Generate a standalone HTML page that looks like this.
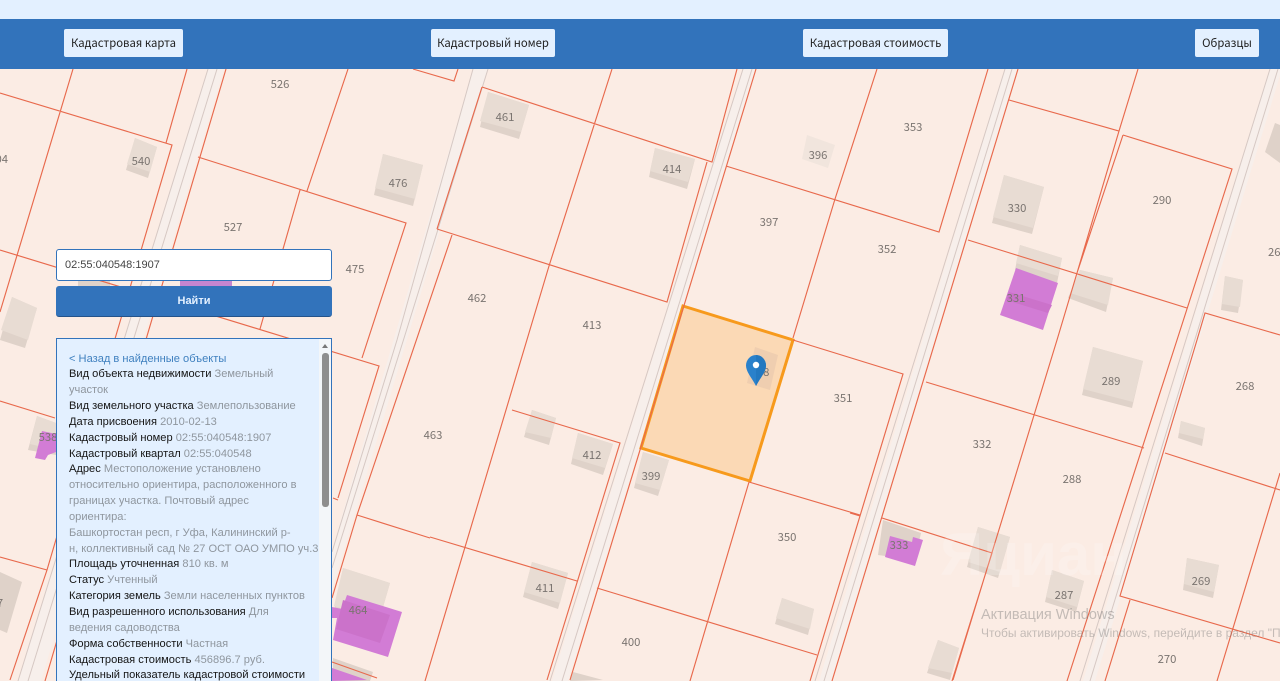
<!DOCTYPE html>
<html lang="ru"><head><meta charset="utf-8"><title>Кадастровая карта</title>
<style>
html,body{margin:0;padding:0;width:1280px;height:681px;overflow:hidden;background:#fbece4}
#wrap{position:relative;width:1280px;height:681px;overflow:hidden}
#top{position:absolute;left:0;top:0;width:1280px;height:19px;background:#e3f0ff}
#nav{position:absolute;left:0;top:19px;width:1280px;height:50px;background:#3273bb}
.nb{position:absolute;top:29px;height:28px;background:#e3f0ff;border-radius:2px;text-align:center;color:#222;font:11.3px/28px "Noto Sans CJK JP","Liberation Sans",sans-serif;white-space:nowrap}
svg{position:absolute;left:0;top:0;filter:blur(.35px)}
svg text{font-family:"Noto Sans CJK JP","DejaVu Sans",sans-serif;font-size:11.3px;fill:#7a7470;text-anchor:middle}
#inp{position:absolute;left:56px;top:249px;width:276px;height:32px;box-sizing:border-box;padding-left:8px;background:#fff;border:1.5px solid #3273bb;border-radius:3px;font:11px/30px "Liberation Sans",sans-serif;color:#444}
#btn{position:absolute;left:56px;top:286px;width:276px;height:31px;background:#3273bb;border-bottom:1px solid #24538a;box-sizing:border-box;border-radius:3px;color:#e3f0ff;text-align:center;font:bold 11px/30px "Liberation Sans",sans-serif}
#panel{position:absolute;left:56px;top:338px;width:276px;height:360px;box-sizing:border-box;background:#e3f0ff;border:1.5px solid #3273bb;overflow:hidden}
#txt{position:absolute;left:12px;top:12.500px;width:250px;height:345px;overflow:hidden;font:11.1px/15.85px "Liberation Sans",sans-serif;color:#8f969e}
#txt b{font-weight:normal;color:#151515}
#txt a{color:#3f80bf}
#sb{position:absolute;right:0;top:0;width:12px;height:360px;background:#f3f6f9}
#th{position:absolute;left:3px;top:14px;width:7px;height:154px;background:#8e8e8e;border-radius:3px}
#ar{position:absolute;left:3px;top:5px;width:0;height:0;border-left:3.5px solid transparent;border-right:3.5px solid transparent;border-bottom:4px solid #777}
.wm{position:absolute;white-space:nowrap;font-family:"Liberation Sans",sans-serif;color:rgba(120,120,120,.42)}
.u{white-space:nowrap}
</style></head><body><div id="wrap">
<svg width="1280" height="681" viewBox="0 0 1280 681">
<g fill="#f7efeb">
<polygon points="208,69 224,69 41,681 18,681"/>
<polygon points="473,69 488,69 332,590 332,550"/>
<polygon points="743,69 755,69 568,681 552,681"/>
<polygon points="1005,69 1017,69 831,681 819,681"/>
<polygon points="1270,69 1282,69 1095,681 1083,681"/>
</g>
<g fill="none" stroke="#d6c8c3" stroke-width="1">
<path d="M208 69L18 681M217 69L28 681M473 69L397 340L332 552M488 69L405 335L332 568M743 69L550 681M752 69L562 681M1005 69L815 681M1012 69L824 681M1270 69L1080 681M1278 69L1090 681"/>
</g>
<g>
<g fill="#dfd2c9">
<polygon points="135,138 157,147 148,178 126,170"/><polygon points="383,154 423,165 413,206 374,195"/><polygon points="12,297 37,308 25,348 0,340"/><polygon points="78,280 110,280 110,290 78,290"/><polygon points="37,416 56,423 56,455 28,450"/><polygon points="0,572 22,582 7,633 0,630"/><polygon points="343,568 390,583 377,628 333,615"/><polygon points="333,658 373,672 370,681 333,681"/><polygon points="488,92 529,105 519,139 480,127"/><polygon points="655,148 695,159 687,189 649,177"/><polygon points="532,410 556,418 549,445 524,437"/><polygon points="578,433 613,444 603,475 571,464"/><polygon points="643,452 669,460 658,496 634,488"/><polygon points="532,562 568,573 558,609 523,597"/><polygon points="782,598 814,609 808,635 775,624"/><polygon points="573,672 603,680 570,681"/><polygon points="1004,175 1044,187 1032,234 992,223"/><polygon points="1020,245 1062,258 1057,283 1015,270"/><polygon points="1080,270 1113,278 1106,312 1068,298"/><polygon points="1225,276 1243,280 1238,313 1221,310"/><polygon points="1275,123 1280,125 1280,163 1265,152"/><polygon points="1093,347 1143,361 1132,408 1082,395"/><polygon points="1181,421 1205,428 1202,446 1178,438"/><polygon points="883,520 921,533 915,560 878,555"/><polygon points="978,527 1010,537 998,578 967,567"/><polygon points="1052,570 1084,581 1076,612 1045,602"/><polygon points="1187,558 1219,565 1213,598 1183,590"/><polygon points="938,640 959,648 950,680 927,673"/>
</g>
<g fill="#e8dcd3">
<polygon points="135,138 157,147 150,172 127,164"/><polygon points="383,154 423,165 415,199 375,188"/><polygon points="12,297 37,308 28,340 1,330"/><polygon points="37,416 56,423 56,450 30,444"/><polygon points="343,568 390,583 379,620 334,606"/><polygon points="488,92 529,105 521,132 480,121"/><polygon points="655,148 695,159 688,182 650,171"/><polygon points="532,410 556,418 551,438 525,432"/><polygon points="578,433 613,444 605,468 572,458"/><polygon points="643,452 669,460 660,490 635,483"/><polygon points="532,562 568,573 560,603 524,592"/><polygon points="782,598 814,609 810,629 776,618"/><polygon points="1004,175 1044,187 1033,228 993,217"/><polygon points="1020,245 1062,258 1058,276 1016,263"/><polygon points="1080,270 1113,278 1108,305 1070,293"/><polygon points="1225,276 1243,280 1240,307 1222,304"/><polygon points="1093,347 1143,361 1133,402 1083,389"/><polygon points="1181,421 1205,428 1203,439 1179,433"/><polygon points="978,527 1010,537 1000,572 968,562"/><polygon points="1052,570 1084,581 1077,607 1046,597"/><polygon points="1187,558 1219,565 1214,592 1184,584"/><polygon points="938,640 959,648 952,673 928,668"/>
</g>
<polygon points="807,135 835,145 828,168 802,159" fill="#f1e5dd"/>
</g>
<polygon points="683,306 793,340 750,481 641,448" fill="#fbd9b5"/>
<polygon points="755,347 778,355 770,390 747,383" fill="#efceb0"/>
<polygon points="683,306 793,340 750,481 641,448" fill="none" stroke="#f79a1c" stroke-width="3"/>
<g fill="#d27cd5">
<polygon points="180,279 232,279 232,286 180,286" fill="#c585d0"/>
<polygon points="42,431 56,434 56,452 48,455 45,460 35,458"/>
<polygon points="347,595 402,612 388,657 333,640 337,618 332,618 332,607 342,609"/>
<polygon points="332,668 367,680 332,681"/>
<polygon points="1016,268 1058,283 1043,330 1000,315"/>
<polygon points="890,536 912,542 913,537 923,540 915,566 885,557"/>
</g>
<polygon points="1009,292 1052,305 1048,313 1006,300" fill="#cb72ca"/>
<polygon points="343,600 390,615 380,643 336,629" fill="#cb72ca"/>
<path fill="none" stroke="#e8694c" stroke-width="1.15" d="M73 69L0 312M0 93L172 145L47 570L10 680M187 69L166 143M226 69L45 681M0 250L379 366L338 498M0 401L55 418M0 557L47 570M198 157L406 223L362 358M348 69L307 191M300 190L260 329M413 69L454 81L458 69M482 87L437 229M452 235L357 515L332 598M437 229L667 302L707 162M482 87L712 162L737 69M612 69L549 266L425 681M512 410L620 443L547 680M430 537L577 581M357 515L430 538M756 69L570 680M726 166L939 232L988 69M877 69L835 199L793 338M793 340L903 374L810 681M749 482L860 515M749 482L690 681M597 588L817 655M1018 69L832 681M1009 100L1119 131L1138 69M1119 131L1077 273L1057 340L953 680M1123 135L1232 169L1177 340L1067 681M1123 135L1077 273M968 240L1187 308M926 382L1144 448M1197 340L1205 313L1280 335M1197 340L1120 596L1280 643M1165 453L1280 490M1280 473L1217 681M1130 600L1105 681M882 518L992 553L952 681M850 513L860 516M332 662L377 678M333 498L338 500"/>
<text x="8" y="163" style="text-anchor:end">504</text>
<text x="280" y="88">526</text><text x="141" y="165">540</text><text x="398" y="187">476</text><text x="233" y="231">527</text><text x="355" y="273">475</text><text x="505" y="121">461</text><text x="672" y="173">414</text><text x="818" y="159">396</text><text x="769" y="226">397</text><text x="477" y="302">462</text><text x="592" y="329">413</text><text x="913" y="131">353</text><text x="887" y="253">352</text><text x="1017" y="212">330</text><text x="1162" y="204">290</text><text x="1268" y="256" style="text-anchor:start">268</text><text x="1016" y="302">331</text><text x="1111" y="385">289</text><text x="1245" y="390">268</text><text x="843" y="402">351</text><text x="760" y="376">348</text><text x="433" y="439">463</text><text x="592" y="459">412</text><text x="651" y="480">399</text><text x="982" y="448">332</text><text x="1072" y="483">288</text><text x="787" y="541">350</text><text x="899" y="549">333</text><text x="545" y="592">411</text><text x="1064" y="599">287</text><text x="1201" y="585">269</text><text x="1167" y="663">270</text><text x="631" y="646">400</text><text x="358" y="614">464</text><text x="48" y="441">538</text><text x="0" y="607">7</text>
<path d="M756 386C752 378 746 372 746 365.500A10 10.500 0 0 1 766 365.500C766 372 760 378 756 386Z" fill="#2a81cb"/>
<path d="M756 386C760 378 766 372 766 365.500A10 10.500 0 0 0 756 355Z" fill="#2378c0"/>
<circle cx="756" cy="365" r="3.2" fill="#fff"/>
</svg>
<div id="top"></div><div id="nav"></div>
<div class="nb" style="left:64px;width:119px">Кадастровая карта</div>
<div class="nb" style="left:431px;width:124px">Кадастровый номер</div>
<div class="nb" style="left:803px;width:145px">Кадастровая стоимость</div>
<div class="nb" style="left:1195px;width:64px">Образцы</div>
<div id="inp">02:55:040548:1907</div>
<div id="btn">Найти</div>
<div id="panel">
<div id="txt"><a>&lt; Назад в найденные объекты</a><br>
<b>Вид объекта недвижимости</b> Земельный<br>участок<br>
<b>Вид земельного участка</b> Землепользование<br>
<b>Дата присвоения</b> 2010-02-13<br>
<b>Кадастровый номер</b> 02:55:040548:1907<br>
<b>Кадастровый квартал</b> 02:55:040548<br>
<b>Адрес</b> Местоположение установлено<br>относительно ориентира, расположенного в<br>границах участка. Почтовый адрес<br>ориентира:<br>Башкортостан респ, г Уфа, Калининский р-<br><span class="u">н, коллективный сад № 27 ОСТ ОАО УМПО уч.39</span><br>
<b>Площадь уточненная</b> 810 кв. м<br>
<b>Статус</b> Учтенный<br>
<b>Категория земель</b> Земли населенных пунктов<br>
<b>Вид разрешенного использования</b> Для<br>ведения садоводства<br>
<b>Форма собственности</b> Частная<br>
<b>Кадастровая стоимость</b> 456896.7 руб.<br>
<b>Удельный показатель кадастровой стоимости</b>
</div>
<div id="sb"><div id="ar"></div><div id="th"></div></div>
</div>
<div class="wm" style="left:940px;top:520px;font-size:60px;font-weight:bold;color:rgba(255,255,255,.18)">Яциан</div>
<div class="wm" style="left:981px;top:607px;font-size:14.5px">Активация Windows</div>
<div class="wm" style="left:981px;top:626px;font-size:12px">Чтобы активировать Windows, перейдите в раздел "Параметры"</div>
</div></body></html>
